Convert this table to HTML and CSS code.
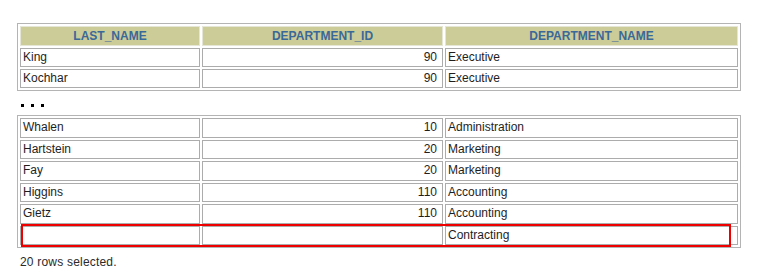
FILE: index.html
```html
<!DOCTYPE html>
<html>
<head>
<meta charset="utf-8">
<link rel="stylesheet" href="styles.css">
</head>
<body>
<div class="page">
  <table class="grid">
    <colgroup><col class="c1"><col class="c2"><col class="c3"></colgroup>
    <tr class="head"><th>LAST_NAME</th><th>DEPARTMENT_ID</th><th>DEPARTMENT_NAME</th></tr>
    <tr><td>King</td><td class="num">90</td><td>Executive</td></tr>
    <tr><td>Kochhar</td><td class="num">90</td><td>Executive</td></tr>
  </table>
  <div class="dots"><span></span><span></span><span></span></div>
  <div class="wrap">
    <table class="grid grid2">
      <colgroup><col class="c1"><col class="c2"><col class="c3"></colgroup>
      <tr><td>Whalen</td><td class="num">10</td><td>Administration</td></tr>
      <tr><td>Hartstein</td><td class="num">20</td><td>Marketing</td></tr>
      <tr><td>Fay</td><td class="num">20</td><td>Marketing</td></tr>
      <tr><td>Higgins</td><td class="num">110</td><td>Accounting</td></tr>
      <tr><td>Gietz</td><td class="num">110</td><td>Accounting</td></tr>
      <tr><td></td><td class="num"></td><td>Contracting</td></tr>
    </table>
    <div class="highlight"></div>
  </div>
  <p class="status">20 rows selected.</p>
</div>
</body>
</html>
```
FILE: styles.css
```css
html, body {
  margin: 0;
  padding: 0;
  background: #ffffff;
}
.page {
  padding: 23px 0 0 17px;
  font-family: "Liberation Sans", Arial, sans-serif;
  font-size: 12px;
  color: #1e1e1e;
}
.grid {
  border-collapse: separate;
  border-spacing: 2px;
  border: 1px solid #b4b4b4;
  width: 724px;
  table-layout: fixed;
}
.c1 { width: 180px; }
.c2 { width: 241px; }
.c3 { width: 293px; }
.grid tr { height: 19px; }
.grid tr.head { height: 20px; }
.grid2 tr { height: 19.5px; }
.grid th, .grid td {
  border: 1px solid #acacac;
  padding: 0 2px;
  line-height: 15px;
  text-align: left;
  vertical-align: middle;
  white-space: nowrap;
  overflow: hidden;
}
.grid th {
  background: #cccc99;
  color: #3a6898;
  font-weight: bold;
  text-align: center;
  border-color: #e6e6d6;
}
.grid td.num {
  text-align: right;
  padding-right: 5px;
}
.dots {
  display: flex;
  gap: 7px;
  margin: 13px 0 8px 4px;
  height: 3px;
}
.dots span {
  width: 3px;
  height: 3px;
  background: #000;
}
.wrap {
  position: relative;
  width: 724px;
}
.highlight {
  position: absolute;
  left: 4px;
  top: 109px;
  width: 706px;
  height: 19px;
  border: 2px solid #ee0000;
}
.status {
  margin: 7px 0 0 3px;
  font-size: 12px;
  line-height: 14px;
  color: #2a2a2a;
  letter-spacing: 0.2px;
}
```
